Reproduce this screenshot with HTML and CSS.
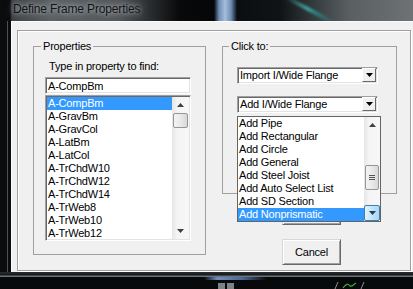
FILE: index.html
```html
<!DOCTYPE html>
<html>
    <head>
        <title>Define Frame Properties</title>
        <link rel="stylesheet" href="styles.css">
    </head>
    <body>
        <div class="screen">
            <div class="titlebar">
                <span class="title">Define Frame Properties</span>
                <span class="glare"></span>
            </div>

            <div class="frame">
                <div class="frame-left"></div>
                <div class="client">
                    <div class="panel">
                        <fieldset class="group group-props">
                            <legend>Properties</legend>
                            <label class="find-label" for="find">Type in property to find:</label>
                            <input class="find" id="find" type="text" value="A-CompBm">
                            <div class="listbox">
                                <ul class="items">
                                    <li class="selected">A-CompBm</li>
                                    <li>A-GravBm</li>
                                    <li>A-GravCol</li>
                                    <li>A-LatBm</li>
                                    <li>A-LatCol</li>
                                    <li>A-TrChdW10</li>
                                    <li>A-TrChdW12</li>
                                    <li>A-TrChdW14</li>
                                    <li>A-TrWeb8</li>
                                    <li>A-TrWeb10</li>
                                    <li>A-TrWeb12</li>
                                </ul>
                                <div class="vscroll">
                                    <span class="arrow"><svg width="7" height="4" viewBox="0 0 7 4"><path d="M0 4 L3.5 0 L7 4 Z" fill="#404040"/></svg></span>
                                    <span class="thumb thumb-props"></span>
                                    <span class="track"></span>
                                    <span class="arrow"><svg width="7" height="4" viewBox="0 0 7 4"><path d="M0 0 L7 0 L3.5 4 Z" fill="#404040"/></svg></span>
                                </div>
                            </div>
                        </fieldset>

                        <div class="right-col">
                            <fieldset class="group group-click">
                                <legend>Click to:</legend>
                                <div class="combo">
                                    <span class="combo-text">Import I/Wide Flange</span>
                                    <span class="combo-btn"><svg width="7" height="4" viewBox="0 0 7 4"><path d="M0 0 L7 0 L3.5 4 Z" fill="#000"/></svg></span>
                                </div>
                                <div class="combo-wrap">
                                    <div class="combo">
                                        <span class="combo-text">Add I/Wide Flange</span>
                                        <span class="combo-btn"><svg width="7" height="4" viewBox="0 0 7 4"><path d="M0 0 L7 0 L3.5 4 Z" fill="#000"/></svg></span>
                                    </div>
                                    <!-- open dropdown, drawn over the OK button -->
                                    <div class="droplist">
                                        <ul class="items">
                                            <li>Add Pipe</li>
                                            <li>Add Rectangular</li>
                                            <li>Add Circle</li>
                                            <li>Add General</li>
                                            <li>Add Steel Joist</li>
                                            <li>Add Auto Select List</li>
                                            <li>Add SD Section</li>
                                            <li class="selected">Add Nonprismatic</li>
                                        </ul>
                                        <div class="vscroll vscroll-small">
                                            <span class="arrow"><svg width="7" height="4" viewBox="0 0 7 4"><path d="M0 4 L3.5 0 L7 4 Z" fill="#404040"/></svg></span>
                                            <span class="track track-top"></span>
                                            <span class="thumb thumb-drop"><span class="grip"></span></span>
                                            <span class="track"></span>
                                            <span class="arrow arrow-hot"><svg width="7" height="4" viewBox="0 0 7 4"><path d="M0 0 L7 0 L3.5 4 Z" fill="#1c3f5e"/></svg></span>
                                        </div>
                                    </div>
                                </div>
                            </fieldset>
                            <!-- OK sits under the open list, only its bottom edge shows -->
                            <button class="btn btn-ok" aria-label="OK"></button>
                            <button class="btn btn-cancel">Cancel</button>
                        </div>
                    </div>
                </div>
            </div>

            <div class="frame-bottom"></div>
            <div class="taskbar">
                <span class="task-glow"></span>
                <span class="task-icon"></span>
                <span class="task-icon"></span>
                <svg class="tray" width="36" height="8" viewBox="0 0 36 8">
                    <path d="M3 8 L6 1" stroke="#8a8f93" stroke-width="1" fill="none"/>
                    <path d="M11 7 C14 3 16 2 18 5 C20 6 22 3 24 2" stroke="#3fae3f" stroke-width="1.2" fill="none"/>
                    <path d="M29 8 L32 1" stroke="#8a8f93" stroke-width="1" fill="none"/>
                </svg>
            </div>
        </div>
    </body>
</html>
```

FILE: styles.css
```css
:root {
    --face-clr: #f0f0f0;
    --edge-clr: #a0a0a0;
    --dark-edge-clr: #696969;
    --select-clr: #3399ff;
}

body {
    margin: 0;
    background-color: #000;
    font-family: 'Liberation Sans', Arial, sans-serif;
    font-size: 11px;
    letter-spacing: -0.2px;
    color: #000;
}

.screen {
    width: 413px;
    height: 289px;
    overflow: hidden;
}

/* title bar */
.titlebar {
    position: relative;
    height: 21px;
    background: linear-gradient(to right,
        #0b0c0d 0, #0b0c0d 10px, #3d4246 12px, #5d6266 50px, #53585c 120px,
        #2a2d30 150px, #08090a 180px, #050607 214px, #6f8cb5 219px, #a7bedb 225px,
        #6f8cb5 231px, #0a0e11 237px, #0f1316 280px, #3b4244 320px, #5a5f62 350px, #6e7275 413px);
    overflow: hidden;
}
.title {
    display: inline-block;
    padding-left: 13px;
    line-height: 18px;
    font-size: 12px;
    letter-spacing: -0.15px;
    color: #141414;
    text-shadow: 0 0 5px rgba(200, 205, 210, 0.9), 0 0 10px rgba(170, 175, 180, 0.7);
}
.glare {
    position: absolute;
    left: 282px;
    top: 8px;
    width: 56px;
    height: 4px;
    transform: rotate(28deg);
    background: linear-gradient(to right, transparent, #3f9c9c 45%, #2e7f80 60%, transparent);
    filter: blur(1px);
}

/* window body */
.frame {
    display: flex;
    height: 251px;
}
.frame-left {
    width: 11px;
    background: linear-gradient(to right, #0b0c0d 0, #0b0c0d 7px, #4c5054 7px, #4c5054 8px, #0b0c0d 8px);
}
.client {
    flex: 1;
    background-color: var(--face-clr);
    border-left: 1px solid #fbfbfb;
    border-top: 1px solid #fbfbfb;
    padding: 8px 0 0 5px;
}
.panel {
    display: flex;
    box-sizing: border-box;
    width: 394px;
    height: 241px;
    padding: 9px 0 0 15px;
    border: 1px solid var(--edge-clr);
    box-shadow: inset 1px 1px #fff, 1px 1px #fff;
}

fieldset.group {
    margin: 0;
    box-sizing: border-box;
    border: 1px solid var(--edge-clr);
    min-width: 0;
}
legend {
    padding: 0 2px;
    line-height: 13px;
}

.group-props {
    width: 173px;
    height: 215px;
    padding: 0 0 0 11px;
}
.group-props legend {
    margin-left: -4px;
}
.find-label {
    display: block;
    margin: 7px 0 0 4px;
    line-height: 13px;
}

.find, .listbox, .combo {
    box-sizing: border-box;
    border: 1px solid;
    border-color: var(--edge-clr) #fff #fff var(--edge-clr);
    box-shadow: inset 1px 1px var(--dark-edge-clr), inset -1px -1px #e3e3e3;
    background-color: #fff;
}
.find {
    display: block;
    margin: 4px 0 0 0;
    width: 146px;
    height: 17px;
    padding: 0 0 0 2px;
    font: inherit;
    letter-spacing: inherit;
    outline: none;
}

.listbox {
    display: flex;
    margin-top: 1px;
    width: 146px;
    height: 146px;
    padding: 1px;
    overflow: hidden;
}
.items {
    flex: 1;
    margin: 0;
    padding: 0;
    list-style: none;
    overflow: hidden;
}
.items li {
    height: 13px;
    line-height: 13px;
    padding-left: 1px;
    white-space: nowrap;
}
.items li.selected {
    background-color: var(--select-clr);
    color: #fff;
}

/* scrollbars */
.vscroll {
    display: flex;
    flex-direction: column;
    width: 17px;
    background: linear-gradient(to right, #e6e6e6, #f4f4f4 30%, #f7f7f7);
}
.vscroll-small {
    width: 16px;
}
.arrow {
    display: flex;
    align-items: center;
    justify-content: center;
    height: 16px;
    flex: none;
}
.arrow-hot {
    box-sizing: border-box;
    border: 1px solid #3c7fb1;
    border-radius: 2px;
    background: linear-gradient(to right, #e3f4fc, #c4e4f5 50%, #a9d9f2);
}
.track {
    flex: 1;
}
.track-top {
    flex: none;
    height: 32px;
}
.thumb {
    flex: none;
    margin: 0 1px;
    box-sizing: border-box;
    border: 1px solid #959595;
    border-radius: 2px;
    background: linear-gradient(to right, #f3f3f3, #e9e9e9 50%, #d8d8d8);
}
.thumb-props {
    height: 15px;
}
.thumb-drop {
    display: flex;
    align-items: center;
    justify-content: center;
    height: 25px;
}
.grip {
    width: 6px;
    height: 5px;
    background: repeating-linear-gradient(to bottom, #555 0, #555 1px, transparent 1px, transparent 2px);
}

/* click-to group */
.right-col {
    margin-left: 16px;
}
.group-click {
    width: 175px;
    height: 154px;
    padding: 0 0 0 14px;
}
.group-click legend {
    margin-left: -8px;
}
.combo {
    display: flex;
    margin-top: 14px;
    width: 141px;
    height: 17px;
    padding: 1px 2px 2px 2px;
}
.combo-text {
    flex: 1;
    line-height: 13px;
    white-space: nowrap;
}
.combo-btn {
    display: flex;
    align-items: center;
    justify-content: center;
    width: 14px;
    margin: -1px -1px -1px 0;
    box-sizing: border-box;
    border: 1px solid;
    border-color: #fff var(--dark-edge-clr) var(--dark-edge-clr) #fff;
    background-color: var(--face-clr);
}
.combo-wrap {
    position: relative;
    margin-top: 12px;
}
.combo-wrap .combo {
    margin-top: 0;
}
.droplist {
    position: absolute;
    left: 0;
    top: 20px;
    z-index: 2;
    display: flex;
    box-sizing: border-box;
    width: 144px;
    height: 106px;
    border: 1px solid #646464;
    background-color: #fff;
}

/* buttons */
.btn {
    display: block;
    margin-left: 60px;
    width: 59px;
    height: 26px;
    box-sizing: border-box;
    border: 1px solid;
    border-color: #d8d8d8 var(--dark-edge-clr) var(--dark-edge-clr) #d8d8d8;
    box-shadow: inset 1px 1px #fff, inset -1px -1px var(--edge-clr);
    background-color: var(--face-clr);
    font: inherit;
    letter-spacing: inherit;
    padding: 0;
    color: #000;
}
.btn-ok {
    margin-top: 5px;
}
.btn-cancel {
    margin-top: 14px;
}

/* bottom of the frame and task bar */
.frame-bottom {
    height: 5px;
    background: linear-gradient(to bottom, #2a2e31 0, #15181a 3px, #6d7276 4px, #6d7276 5px);
}
.taskbar {
    position: relative;
    height: 12px;
    background-color: #07090a;
}
.task-glow {
    position: absolute;
    left: 205px;
    top: 0;
    width: 62px;
    height: 3px;
    background: linear-gradient(to right, #0c1420, #6f8fc0 20%, #4b6894 60%, transparent);
}
.task-icon {
    position: absolute;
    top: 6px;
    width: 7px;
    height: 6px;
    background-color: #7d8286;
}
.task-icon:nth-of-type(2) {
    left: 218px;
}
.task-icon:nth-of-type(3) {
    left: 227px;
}
.tray {
    position: absolute;
    left: 332px;
    top: 4px;
}
```
